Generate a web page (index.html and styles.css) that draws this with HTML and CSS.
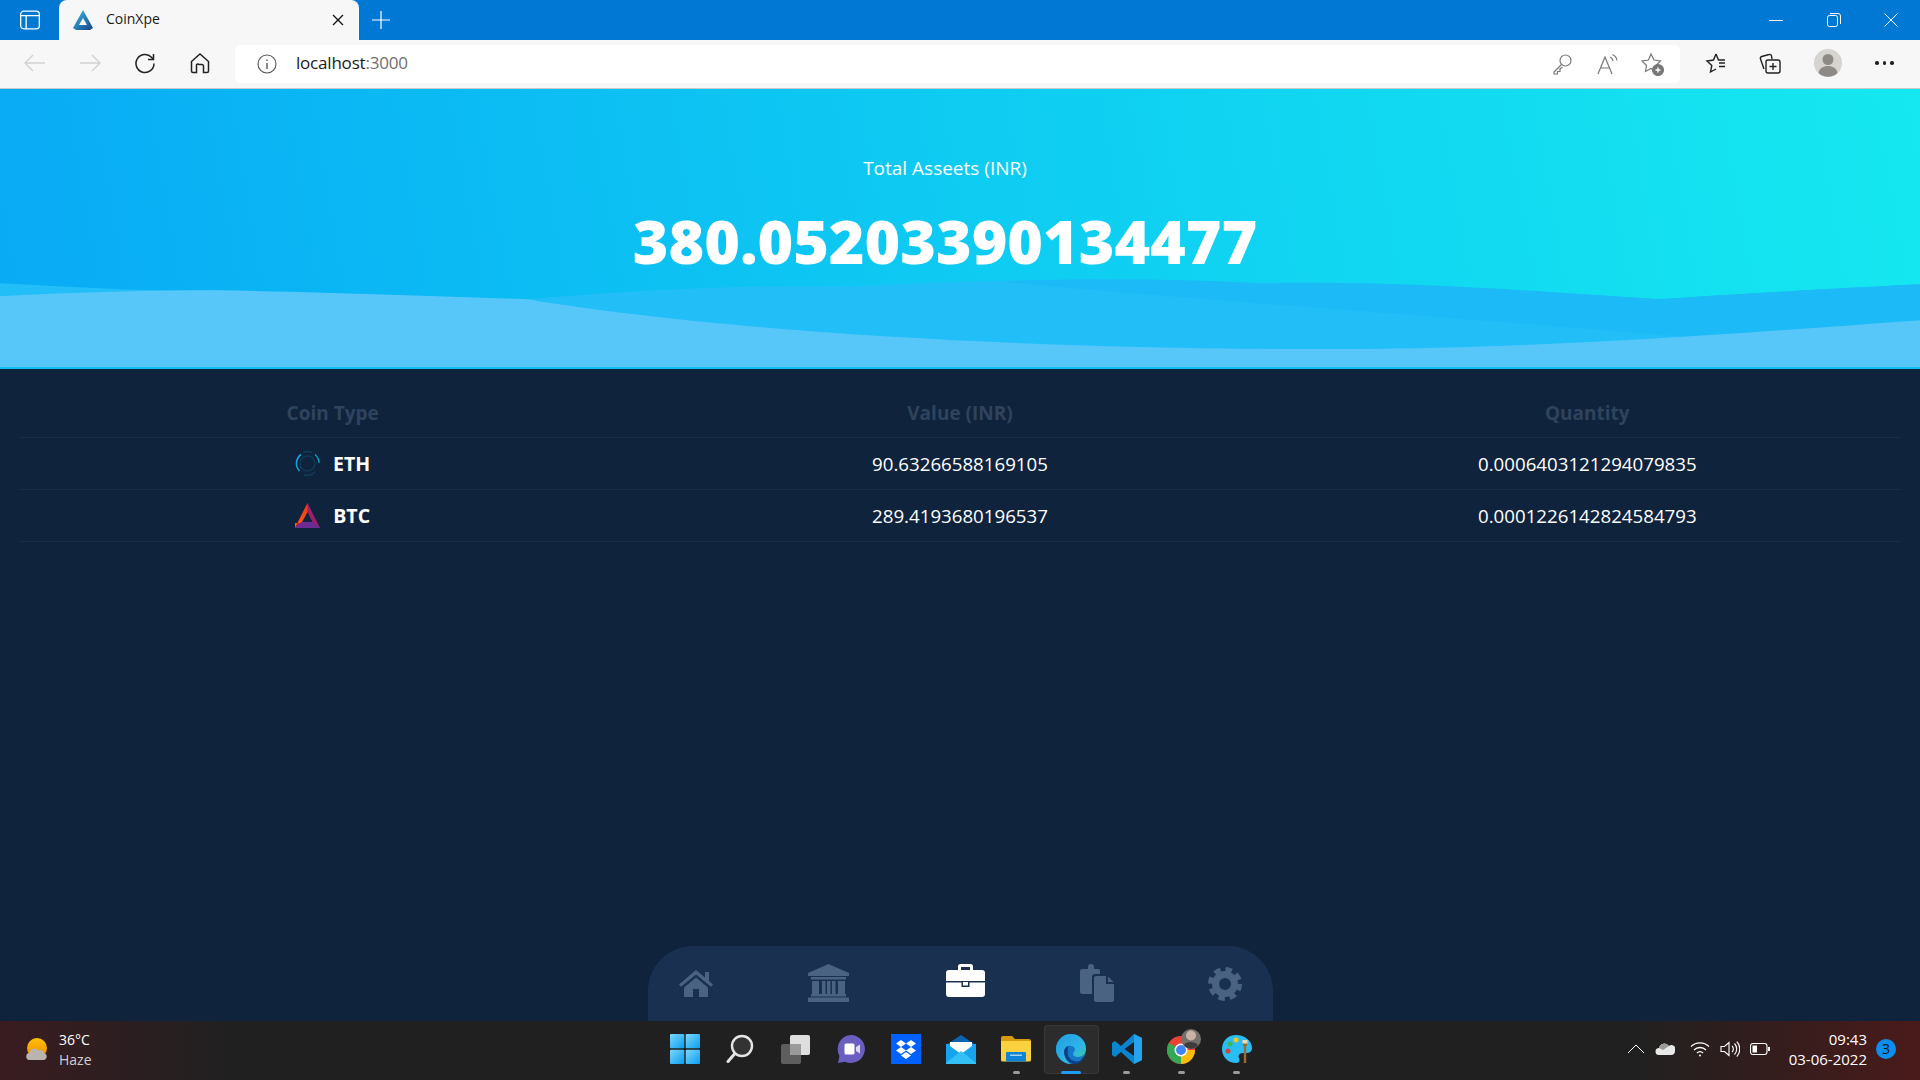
FILE: index.html
```html
<!DOCTYPE html>
<html lang="en">
<head>
<meta charset="utf-8">
<title>CoinXpe</title>
<link rel="stylesheet" href="styles.css">
</head>
<body>
<svg class="defs" width="0" height="0">
  <defs>
    <linearGradient id="logoGrad" x1="0" y1="0" x2="1" y2="1"><stop offset="0" stop-color="#35c3ee"/><stop offset="1" stop-color="#1b3f86"/></linearGradient>
    <linearGradient id="btcLeft" x1="0" y1="1" x2="1" y2="0"><stop offset="0" stop-color="#ff6a00"/><stop offset="1" stop-color="#e8361c"/></linearGradient>
    <linearGradient id="winGrad" x1="0" y1="0" x2="1" y2="1"><stop offset="0" stop-color="#7ad8fb"/><stop offset="1" stop-color="#0d9cf0"/></linearGradient>
    <linearGradient id="edgeGrad" x1="0" y1="0" x2="1" y2="1"><stop offset="0" stop-color="#1f9fe0"/><stop offset=".6" stop-color="#2fb4e8"/><stop offset="1" stop-color="#35d67f"/></linearGradient>
    <linearGradient id="sunGrad" x1="0" y1="0" x2="0" y2="1"><stop offset="0" stop-color="#ffc107"/><stop offset="1" stop-color="#f08a00"/></linearGradient>
  </defs>
</svg>

<header class="titlebar">
  <div class="tb-side">
    <svg class="ic-22" viewBox="0 0 20 20" fill="none" stroke="#fff" stroke-width="1.2"><rect x="1.5" y="2" width="17" height="16" rx="3"/><path d="M1.5 6h17M6.5 6v12" stroke-width="1.2"/></svg>
  </div>
  <div class="tab">
    <svg class="ic-22" viewBox="0 0 22 22"><path d="M11 1 21 19 18 21H4L1 19Z" fill="url(#logoGrad)"/><path d="M11 9 15 16H7Z" fill="#f7f7f7"/></svg>
    <span class="tab-title">CoinXpe</span>
    <svg class="tab-close" viewBox="0 0 12 12" fill="none" stroke="#111" stroke-width="1.3"><path d="M1 1l10 10M11 1 1 11"/></svg>
  </div>
  <div class="tab-new">
    <svg class="ic-18" viewBox="0 0 18 18" fill="none" stroke="#fff" stroke-width="1.2"><path d="M9 0v18M0 9h18"/></svg>
  </div>
  <div class="win-controls">
    <span class="win-btn"><svg class="ic-14" viewBox="0 0 14 14" stroke="#fff" fill="none"><path d="M0 7.5h14"/></svg></span>
    <span class="win-btn"><svg class="ic-14" viewBox="0 0 14 14" stroke="#fff" fill="none"><rect x=".5" y="2.5" width="10" height="11" rx="2"/><path d="M3 .5h8a2.5 2.5 0 0 1 2.5 2.5v8"/></svg></span>
    <span class="win-btn"><svg class="ic-14" viewBox="0 0 14 14" stroke="#fff" fill="none"><path d="M.5.5l13 13M13.500.5l-13 13"/></svg></span>
  </div>
</header>

<nav class="toolbar">
  <span class="tool-btn"><svg class="ic-24" viewBox="0 0 24 24" fill="none" stroke="#d2d2d2" stroke-width="1.4"><path d="M22 12H2M10 4l-8 8 8 8"/></svg></span>
  <span class="tool-btn"><svg class="ic-24" viewBox="0 0 24 24" fill="none" stroke="#d2d2d2" stroke-width="1.4"><path d="M2 12h20M14 4l8 8-8 8"/></svg></span>
  <span class="tool-btn"><svg class="ic-24" viewBox="0 0 24 24" fill="none" stroke="#222" stroke-width="1.5"><path d="M21 12.500A9 9 0 1 1 18.500 6.300L20.500 8.500"/><path d="M20.500 3v5.500H15"/></svg></span>
  <span class="tool-btn"><svg class="ic-24" viewBox="0 0 24 24" fill="none" stroke="#222" stroke-width="1.5"><path d="M3.500 10.500 12 3l8.500 7.500V20a1.500 1.500 0 0 1-1.500 1.500h-3.500V15a1.500 1.500 0 0 0-1.500-1.500h-3A1.500 1.500 0 0 0 8.500 15v6.500H5A1.500 1.500 0 0 1 3.500 20Z"/></svg></span>
  <div class="address">
    <svg class="ic-20" viewBox="0 0 20 20" fill="none" stroke="#555" stroke-width="1.1"><circle cx="10" cy="10" r="9"/><path d="M10 9v6M10 5.500v1.500" stroke-width="1.400"/></svg>
    <span class="url">localhost<span class="url-port">:3000</span></span>
    <span class="addr-actions">
      <svg class="ic-22 key-ic" viewBox="0 0 22 22" fill="none" stroke="#777" stroke-width="1.2"><circle cx="14.500" cy="7.500" r="5.500"/><path d="M10.500 11.500 3 19v2h3.500v-2.500H9V16l2.500-2"/></svg>
      <svg class="ic-24" viewBox="0 0 24 24" fill="none" stroke="#777" stroke-width="1.200"><path d="M2 22 9 5l7 17M4.500 16h9M14 5a5 5 0 0 1 3 4M16.500 2.500a8 8 0 0 1 4.500 6"/></svg>
      <svg class="ic-24" viewBox="0 0 24 24" fill="none" stroke="#777" stroke-width="1.200"><path d="M10 2l3 6 6.500 1-4.500 4.500 1 6L10 16.500 4.500 19.500l1-6L1 9l6.500-1z"/><circle cx="17" cy="18" r="5.500" fill="#777"/><path d="M14.500 18h5M17 15.500v5" stroke="#fff" stroke-width="1.400"/></svg>
    </span>
  </div>
  <div class="tool-right">
    <span class="tool-btn"><svg class="ic-24" viewBox="0 0 24 24" fill="none" stroke="#222" stroke-width="1.400"><path d="M11 3l2.500 6H20M14 12h6M14 15.500h6M11 3 8.500 9 2 10l4.800 4.500L5.500 21 11 18"/></svg></span>
    <span class="tool-btn collections"><svg class="ic-24" viewBox="0 0 24 24" fill="none" stroke="#222" stroke-width="1.400"><rect x="8" y="9" width="14" height="13" rx="2"/><path d="M15 12v7M11.500 15.500h7M6 18 2.500 8a2 2 0 0 1 1.300-2.500L11 3.500a2 2 0 0 1 2.500 1.300L14 8"/></svg></span>
    <span class="avatar"><svg class="ic-28" viewBox="0 0 28 28"><circle cx="14" cy="14" r="14" fill="#d6d4d0"/><circle cx="14" cy="10.500" r="5.500" fill="#8d8a86"/><path d="M4.500 24c1-5 5-7 9.500-7s8.500 2 9.500 7a14 14 0 0 1-19 0Z" fill="#8d8a86"/></svg></span>
    <span class="more"><i></i><i></i><i></i></span>
  </div>
</nav>

<div class="page">
  <section class="hero">
    <svg class="waves" viewBox="0 0 1920 279" preserveAspectRatio="none">
      <path fill="#22bef8" d="M0 195C60 198 110 201 153 202C290 205 420 208 527 211C640 202 740 196 857 198C1000 190 1130 190 1261 195C1400 197 1540 203 1659 211C1750 205 1840 200 1920 196V279H0Z"/>
      <path fill="#1cbaf6" d="M1000 193C1100 204 1400 225 1700 250L1920 240V196C1840 200 1750 205 1659 211C1540 203 1400 192 1261 195C1170 190 1080 190 1000 193Z"/>
      <path fill="#57c7fa" d="M0 208C80 204 150 202 220 202C340 204 440 208 527 211C700 240 1000 262 1347 261C1560 260 1740 245 1920 232V279H0Z"/>
    </svg>
    <p class="hero-label">Total Asseets (INR)</p>
    <p class="hero-value">380.05203390134477</p>
  </section>

  <main class="assets">
    <table class="coins">
      <thead>
        <tr><th>Coin Type</th><th>Value (INR)</th><th>Quantity</th></tr>
      </thead>
      <tbody>
        <tr>
          <td><span class="coin">
            <svg class="coin-icon" viewBox="0 0 25 25" fill="none"><circle cx="12.500" cy="12.500" r="7.500" stroke="#123a55" stroke-width="1.500"/><path d="M6 3.500A11 11 0 0 0 4.500 20" stroke="#12a5d8" stroke-width="1.600"/><path d="M20 3.500A11 11 0 0 1 24 12" stroke="#12a5d8" stroke-width="1.300"/><path d="M8 1.500a11.500 11.500 0 0 1 9 0M9 24a11.500 11.500 0 0 0 11-3" stroke="#12405c" stroke-width="1.300"/></svg>
            <b>ETH</b></span></td>
          <td>90.63266588169105</td>
          <td>0.0006403121294079835</td>
        </tr>
        <tr>
          <td><span class="coin">
            <svg class="coin-icon" viewBox="0 0 25 25"><path d="M12.500 0 25 25H0Z" fill="#9b1f6b"/><path d="M12.500 0V10L6 20H0L0 25Z" fill="url(#btcLeft)"/><path d="M0 25 7 19H18L25 25Z" fill="#6c2b94"/><path d="M12.500 9 17.500 19H7.500Z" fill="#0f233d"/></svg>
            <b>BTC</b></span></td>
          <td>289.4193680196537</td>
          <td>0.0001226142824584793</td>
        </tr>
      </tbody>
    </table>

    <div class="dock">
      <svg class="nav-home" viewBox="0 0 34 27" fill="#4a6382"><path d="M17 0 26 7.500V2h4v9l4 3.500-2 2.300L17 4.500 2 16.800 0 14.500Z"/><path d="M17 7.500 29 17.500V27H20V19h-6v8H5V17.500Z"/></svg>
      <svg class="nav-bank" viewBox="0 0 41 38" fill="#4a6382"><path d="M20.500 0 41 9v3H0V9Z"/><rect x="3" y="13" width="35" height="2.500"/><rect x="4" y="17" width="7" height="13"/><rect x="14" y="17" width="3.500" height="13"/><rect x="19" y="17" width="3.500" height="13"/><rect x="24" y="17" width="3.500" height="13"/><rect x="30" y="17" width="7" height="13"/><rect x="3" y="30" width="35" height="2.500"/><rect x="0" y="33.500" width="41" height="4.500"/></svg>
      <svg class="nav-case" viewBox="0 0 39 33" fill="#fff"><path d="M12 6V2.500A2.500 2.500 0 0 1 14.500 0h10A2.500 2.500 0 0 1 27 2.500V6h-3V3H15v3Z"/><path d="M3 6h33a3 3 0 0 1 3 3v8H0V9a3 3 0 0 1 3-3Z"/><path d="M0 18.500h15.500V23h8v-4.500H39V30a3 3 0 0 1-3 3H3a3 3 0 0 1-3-3Z"/><rect x="17" y="18" width="5" height="3.500"/></svg>
      <svg class="nav-files" viewBox="0 0 34 38" fill="#4a6382"><path d="M2 5h6V3a3 3 0 0 1 3-3 3 3 0 0 1 3 3v2h4a2 2 0 0 1 2 2v3H15a3 3 0 0 0-3 3v17H2a2 2 0 0 1-2-2V7a2 2 0 0 1 2-2Z"/><path d="M16 12h10v8h8v16a2 2 0 0 1-2 2H16a2 2 0 0 1-2-2V14a2 2 0 0 1 2-2Z"/><path d="M28 12.500 33.500 18H28Z"/></svg>
      <svg class="nav-gear" viewBox="0 0 34 34" fill="none" stroke="#4a6382"><circle cx="17" cy="17" r="9.500" stroke-width="7"/><circle cx="17" cy="17" r="14.500" stroke-width="5" stroke-dasharray="6.400 5"/></svg>
    </div>
  </main>
</div>

<footer class="taskbar">
  <div class="weather">
    <svg class="weather-icon" viewBox="0 0 24 24"><circle cx="12" cy="10" r="10" fill="url(#sunGrad)"/><path d="M5 22a3.500 3.500 0 0 1-.5-7 5 5 0 0 1 9-2.500 4 4 0 0 1 6 2.800A3.500 3.500 0 0 1 19 22Z" fill="#b8b4ae"/></svg>
    <div class="weather-text"><span>36°C</span><span class="haze">Haze</span></div>
  </div>
  <div class="apps">
    <span class="app"><svg class="ic-30" viewBox="0 0 30 30" fill="url(#winGrad)"><rect width="14.300" height="14.300" rx="1"/><rect x="15.700" width="14.300" height="14.300" rx="1"/><rect y="15.700" width="14.300" height="14.300" rx="1"/><rect x="15.700" y="15.700" width="14.300" height="14.300" rx="1"/></svg></span>
    <span class="app"><svg class="ic-30" viewBox="0 0 30 30" fill="none"><circle cx="17" cy="12" r="10" stroke="#e4e4e4" stroke-width="2.400" fill="#333"/><path d="M9.500 20 3 27.500" stroke="#e4e4e4" stroke-width="3" stroke-linecap="round"/></svg></span>
    <span class="app"><svg class="ic-30" viewBox="0 0 30 30"><rect x="10" y="1" width="20" height="20" rx="2" fill="#dedede"/><rect x="1" y="10" width="20" height="20" rx="2" fill="#5e5e5e"/><rect x="10" y="10" width="11" height="11" fill="#9a9a9a"/></svg></span>
    <span class="app"><svg class="ic-30" viewBox="0 0 30 30"><path d="M15 1a14 14 0 1 1-6 26.700L2 29l1.500-7A14 14 0 0 1 15 1Z" fill="#6a5fc1"/><rect x="8.500" y="9.500" width="10" height="11" rx="1.500" fill="#fff"/><path d="M20 13l4-2.500v9L20 17Z" fill="#dcd8f6"/></svg></span>
    <span class="app"><svg class="ic-30" viewBox="0 0 30 30"><rect width="30" height="30" fill="#0061fe"/><path fill="#fff" d="M10 6 15 9.500 10 13 5 9.500ZM20 6 25 9.500 20 13 15 9.500ZM10 13 15 16.500 10 20 5 16.500ZM20 13 25 16.500 20 20 15 16.500ZM15 18 20 21.500 15 25 10 21.500Z"/></svg></span>
    <span class="app"><svg class="ic-30" viewBox="0 0 30 30"><path d="M15 1 30 11H0Z" fill="#0b64b4"/><path d="M0 10h30v19a1 1 0 0 1-1 1H1a1 1 0 0 1-1-1Z" fill="#17a4ee"/><path d="M4 8h22v4L15 20 4 12Z" fill="#fff"/><path d="M0 29 15 17l15 12v1H0Z" fill="#35c0f5"/></svg></span>
    <span class="app app-open"><svg class="ic-30" viewBox="0 0 30 30"><path d="M0 4a2 2 0 0 1 2-2h9l3 3h14a2 2 0 0 1 2 2v4H0Z" fill="#d79c0c"/><path d="M0 7h30v19a1.500 1.500 0 0 1-1.500 1.500h-27A1.500 1.500 0 0 1 0 26Z" fill="#fbd13f"/><rect x="5" y="18" width="20" height="9.500" rx="1" fill="#0f83d8"/><rect x="9" y="20.500" width="12" height="1.500" fill="#9fd7fb"/></svg></span>
    <span class="app app-active"><svg class="ic-30" viewBox="0 0 30 30"><circle cx="15" cy="15" r="15" fill="#1478c8"/><path d="M15 0a15 15 0 0 1 15 15c0 5-4 8-8 8-5 0-6-3-3.500-6 1.500-2-1-6-6-5C6 13 7 26 15 30 7 30 0 23 0 15A15 15 0 0 1 15 0Z" fill="url(#edgeGrad)"/><path d="M12.500 12c-5 1-5.500 7-3 11.500 2 3.500 5 6 8 6.500 3 .5 7.500-1 10-4.500-4 2.500-9 2.500-12.500 0-3-2-4.500-6-2.500-13.500Z" fill="#0b3f87"/></svg></span>
    <span class="app app-open"><svg class="ic-30" viewBox="0 0 30 30"><path d="M22 0 30 4V26L22 30 9 18 3 23 0 21V9L3 7 9 12Z" fill="#0a84cf"/><path d="M22 8 12.500 15 22 22Z" fill="#1f1f1f"/><path d="M22 0 30 4V26L22 30Z" fill="#24a4ee"/></svg></span>
    <span class="app app-open"><svg class="ic-30 chrome-ic" viewBox="0 0 30 30"><circle cx="14" cy="16" r="14" fill="#ea4335"/><path d="M14 16 1.900 9A14 14 0 0 0 14 30Z" fill="#34a853"/><path d="M14 16 14 30A14 14 0 0 0 28 16Z" fill="#fbbc05"/><circle cx="14" cy="16" r="6.500" fill="#fff"/><circle cx="14" cy="16" r="5" fill="#4285f4"/><circle cx="24" cy="5" r="10" fill="#75706b"/><circle cx="24" cy="1.500" r="5" fill="#c9b3a6"/><path d="M17 11c2-4 11-4 14 0-3 5-11 5-14 0Z" fill="#3f3c3a"/></svg></span>
    <span class="app app-open"><svg class="ic-30" viewBox="0 0 30 30"><path d="M14 1C6 1 0 7 0 15s6 14 14 14c4 0 4-3 3-5s0-5 4-5h3c4 0 6-2 6-5C30 7 23 1 14 1Z" fill="#29bdf2"/><circle cx="8" cy="10" r="2.500" fill="#3fb950"/><circle cx="14" cy="6" r="2.500" fill="#f5c518"/><circle cx="6" cy="17" r="2.500" fill="#d9432f"/><path d="M21 9h4v3h-.800v17h-2.400V12H21Z" fill="#9b6a33"/><rect x="20.500" y="6" width="5" height="3.500" fill="#f0d8b0"/></svg></span>
  </div>
  <div class="tray">
    <svg class="ic-18" viewBox="0 0 18 18" fill="none" stroke="#fff" stroke-width="1"><path d="M1 13l8-8 8 8"/></svg>
    <svg class="ic-20" viewBox="0 0 20 14"><path d="M4 13a3.500 3.500 0 0 1 0-7 5.500 5.500 0 0 1 10-2A4 4 0 0 1 20 9c0 2.500-1.500 4-4 4Z" fill="#e8e8e8"/><path d="M4 6a5.500 5.500 0 0 1 10-2L8 8Z" fill="#9a9a9a"/></svg>
    <svg class="ic-20 tray-wifi" viewBox="0 0 20 16" fill="none" stroke="#fff" stroke-width="1.300"><path d="M1 5.500a13 13 0 0 1 18 0M4 9a8.500 8.500 0 0 1 12 0M7 12a4 4 0 0 1 6 0"/><circle cx="10" cy="14.500" r="1" fill="#fff" stroke="none"/></svg>
    <svg class="ic-20" viewBox="0 0 20 18" fill="none" stroke="#fff" stroke-width="1.100"><path d="M1 6.500h3.500L9 2.500v13l-4.500-4H1ZM12 6a4 4 0 0 1 0 6M14.500 3.500a8 8 0 0 1 0 11M16.800 1.500a11 11 0 0 1 0 15"/></svg>
    <svg class="ic-20" viewBox="0 0 20 14" fill="none" stroke="#fff" stroke-width="1.100"><rect x=".5" y="1.500" width="16.500" height="11" rx="2.500"/><rect x="2.500" y="3.500" width="4.500" height="7" fill="#fff" stroke="none"/><rect x="18" y="5" width="2" height="4" fill="#fff" stroke="none"/></svg>
    <div class="clock"><span>09:43</span><span>03-06-2022</span></div>
    <span class="badge">3</span>
  </div>
</footer>
</body>
</html>
```
FILE: styles.css
```css
* { box-sizing: border-box; }
html, body { margin: 0; height: 100%; }
body {
  width: 1920px;
  height: 1080px;
  overflow: hidden;
  display: flex;
  flex-direction: column;
  font-family: "Open Sans", "Noto Sans", sans-serif;
  background: #0f233d;
}
svg { display: block; flex: none; }
.defs { position: absolute; }
.ic-14 { width: 14px; height: 14px; }
.ic-18 { width: 18px; height: 18px; }
.ic-20 { width: 20px; height: 20px; }
.ic-22 { width: 22px; height: 22px; }
.ic-24 { width: 24px; height: 24px; }
.ic-28 { width: 28px; height: 28px; }
.ic-30 { width: 30px; height: 30px; }

.titlebar {
  height: 40px;
  flex: none;
  display: flex;
  align-items: center;
  background: #0078d4;
}
.tb-side { width: 59px; display: flex; justify-content: center; }
.tab {
  width: 300px;
  height: 40px;
  padding: 0 15px 0 13px;
  display: flex;
  align-items: center;
  gap: 12px;
  background: #f7f7f7;
  border-radius: 8px 8px 0 0;
}
.tab-title { flex: 1; font-size: 14px; line-height: 38px; height: 40px; color: #1a1a1a; }
.tab-close { width: 12px; height: 12px; }
.tab-new { width: 44px; display: flex; justify-content: center; }
.win-controls { margin-left: auto; display: flex; }
.win-btn { width: 57.500px; display: flex; justify-content: center; }

.toolbar {
  height: 49px;
  flex: none;
  padding: 4px 7px 0 7px;
  display: flex;
  align-items: flex-start;
  background: #f7f7f7;
  border-bottom: 1px solid #c9c9c9;
}
.tool-btn { width: 55px; height: 38px; display: flex; align-items: center; justify-content: center; }
.address {
  width: 1445px;
  height: 38px;
  margin: 1px 0 0 8px;
  padding: 0 15px 0 22px;
  display: flex;
  align-items: center;
  gap: 19px;
  background: #fff;
  border-radius: 6px;
}
.url { font-size: 17px; line-height: 36px; height: 38px; color: #1a1a1a; letter-spacing: -.2px; }
.url-port { color: #6f6f6f; }
.addr-actions { margin-left: auto; display: flex; align-items: center; gap: 21px; }
.key-ic { margin-right: 2px; }
.tool-right { display: flex; align-items: center; height: 38px; margin-left: 9.500px; }
.collections { margin-left: -2.500px; }
.avatar { margin: 0 0 0 17px; }
.more { display: flex; gap: 4px; margin-left: 33px; }
.more i { width: 3.500px; height: 3.500px; border-radius: 50%; background: #222; }

.page { flex: 1; display: flex; flex-direction: column; min-height: 0; }

.hero {
  position: relative;
  height: 280px;
  flex: none;
  padding: 66px 30px 0 0;
  text-align: center;
  color: #fff;
  background: linear-gradient(80deg, #09aaf5 0%, #0ecbf2 50%, #15e8f0 100%);
  border-bottom: 2px solid #10bdf5;
}
.waves { position: absolute; left: 0; top: 0; width: 100%; height: 100%; }
.hero-label { position: relative; margin: 0; font-size: 19px; line-height: 26px; }
.hero-value { position: relative; margin: 18px 0 0; font-size: 61px; line-height: 84px; font-weight: 800; letter-spacing: -.05px; }

.assets {
  flex: 1;
  min-height: 0;
  padding: 21px 19px 0;
  display: flex;
  flex-direction: column;
  justify-content: space-between;
}
.coins { width: 100%; border-collapse: collapse; table-layout: fixed; text-align: center; color: #fff; }
.coins th { height: 47px; padding: 0 0 1px; font-size: 19px; font-weight: 700; color: #2f435c; border-bottom: 1px solid #1a2c46; }
.coins td { height: 52px; padding: 0; font-size: 18.700px; border-bottom: 1px solid #1a2c46; }
.coin { display: inline-flex; align-items: center; gap: 13px; vertical-align: middle; margin-top: -1px; }
.coin b { font-weight: 700; font-size: 19.500px; }
.coin-icon { width: 25px; height: 25px; }

.dock {
  align-self: center;
  width: 625px;
  height: 75px;
  padding: 18px 31px 0;
  display: flex;
  align-items: flex-start;
  background: #1a3050;
  border-radius: 45px 45px 0 0;
}
.nav-home { width: 34px; height: 27px; margin-top: 6px; }
.nav-bank { width: 41px; height: 38px; margin-left: 95.500px; }
.nav-case { width: 39px; height: 33px; margin-left: 97px; }
.nav-files { width: 34px; height: 38px; margin-left: 94.500px; }
.nav-gear { width: 34px; height: 34px; margin: 3px 0 0 94px; }

.taskbar {
  height: 59px;
  flex: none;
  padding-bottom: 3px;
  display: grid;
  grid-template-columns: 657.500px 608px 1fr;
  align-items: center;
  color: #fff;
  background: linear-gradient(90deg, #3a1c20 0, #202020 12%, #202020 85%, #4a1a1a 100%);
}
.weather { display: flex; align-items: center; gap: 10px; padding: 2px 0 0 25px; }
.weather-icon { width: 24px; height: 24px; }
.weather-text { display: flex; flex-direction: column; font-size: 14px; line-height: 20px; }
.haze { color: #cfcfcf; }
.apps { display: flex; }
.app { position: relative; width: 55.200px; height: 49px; display: flex; align-items: center; justify-content: center; border-radius: 4px; }
.app-open::after, .app-active::after {
  content: "";
  position: absolute;
  left: 50%;
  bottom: 0;
  width: 7px;
  height: 3px;
  margin-left: -3.500px;
  border-radius: 2px;
  background: #9a9a9a;
}
.app-active { background: #2c2c2c; box-shadow: inset 0 0 0 1px #383838; }
.app-active::after { width: 20px; margin-left: -10px; background: #1e9bf5; }
.chrome-ic { overflow: visible; }
.tray { display: flex; align-items: center; justify-content: flex-end; gap: 10px; padding-right: 24px; }
.tray-wifi { margin-left: 5px; }
.clock { display: flex; flex-direction: column; align-items: flex-end; font-size: 15px; line-height: 20px; margin-left: 9px; }
.badge { width: 20px; height: 20px; margin-left: -1px; border-radius: 50%; background: #0a8ff0; color: #111; font-size: 14px; line-height: 20px; text-align: center; }
```
